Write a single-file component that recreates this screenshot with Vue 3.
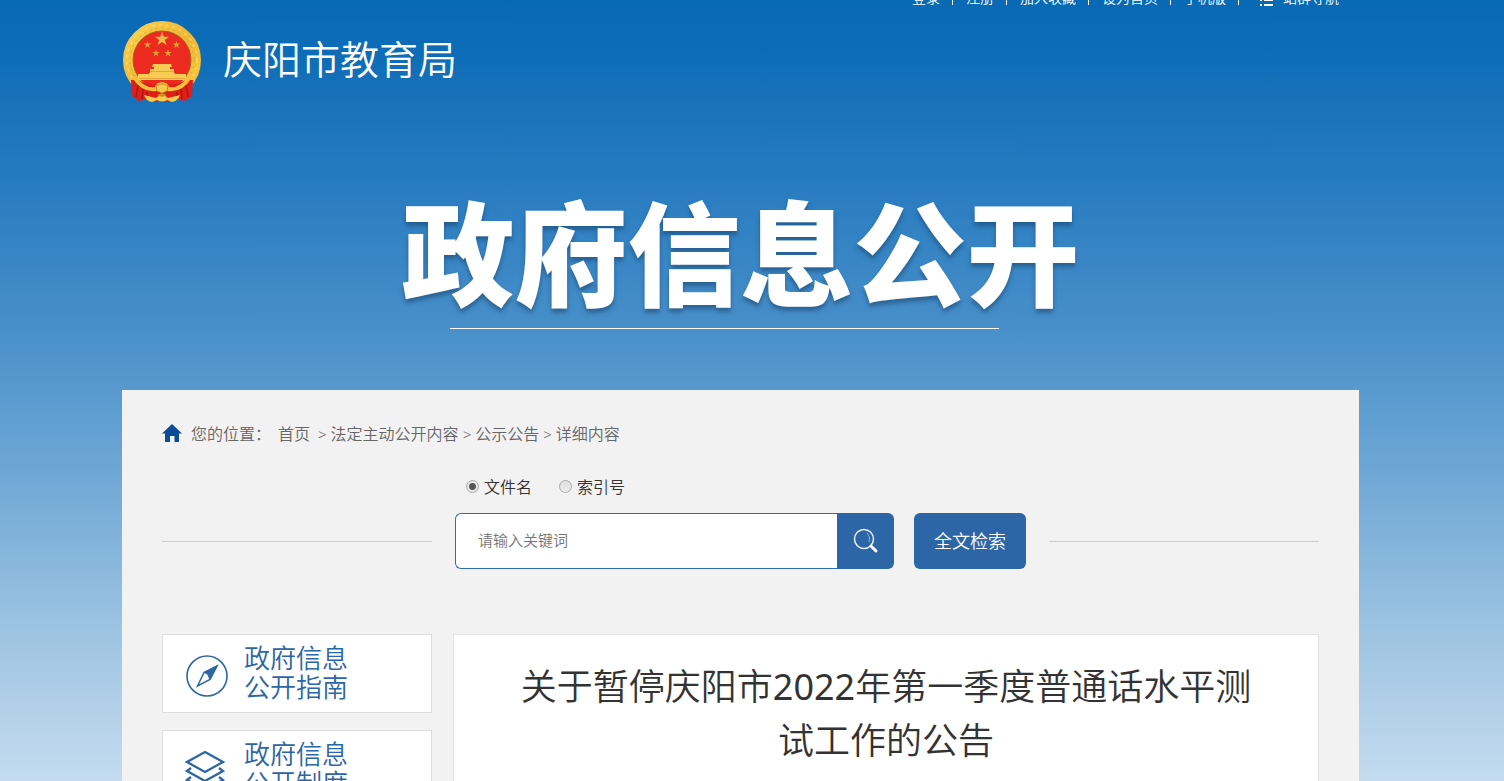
<script setup>
import { ref } from 'vue'

const topLinks = ['登录', '注册', '加入收藏', '设为首页', '手机版']
const crumbs = ['法定主动公开内容', '公示公告', '详细内容']
const mode = ref('name')
const keyword = ref('')
</script>

<template>
  <div class="page">
    <div class="wrap">
      <nav class="topbar">
        <template v-for="item in topLinks" :key="item">
          <a href="#">{{ item }}</a>
          <i class="bar"></i>
        </template>
        <a href="#" class="group-nav">
          <svg width="13" height="12" viewBox="0 0 13 12" fill="#fff">
            <path d="M0 0h2v2H0zM4 0h9v2H4zM0 5h2v2H0zM4 5h9v2H4zM0 10h2v2H0zM4 10h9v2H4z" />
          </svg>
          站群导航
        </a>
      </nav>

      <header class="brand">
        <svg class="emblem" width="80" height="84" viewBox="0 0 80 84" aria-hidden="true">
          <defs>
            <linearGradient id="gold" x1="0" y1="0" x2="1" y2="1">
              <stop offset="0" stop-color="#fad24f" />
              <stop offset="0.5" stop-color="#eeb634" />
              <stop offset="1" stop-color="#f8c93f" />
            </linearGradient>
          </defs>
          <circle cx="40" cy="40" r="34" fill="none" stroke="url(#gold)" stroke-width="10" />
          <circle cx="40" cy="40" r="35" fill="none" stroke="#fbdc72" stroke-width="2" stroke-dasharray="3 4" opacity="0.7" />
          <circle cx="40" cy="40" r="32" fill="none" stroke="#dfa22c" stroke-width="1" stroke-dasharray="2 4" />
          <circle cx="40" cy="40" r="29" fill="#ec2a20" stroke="#a96b18" stroke-width="1" />
          <path fill="#eabb45" d="M40 11.500l1.700 5.200h5.500l-4.400 3.200 1.700 5.200-4.500-3.200-4.500 3.200 1.700-5.200-4.400-3.200h5.500z" />
          <g fill="#dca035">
            <path id="small-star" d="M25.500 21l.9 2.600h2.800l-2.200 1.600.8 2.700-2.300-1.600-2.300 1.600.8-2.700-2.200-1.600h2.800z" />
            <use href="#small-star" x="29" />
            <use href="#small-star" x="8.500" y="8.500" />
            <use href="#small-star" x="20.500" y="8.500" />
          </g>
          <path fill="#f8cc52" d="M31 44h18l1 3H30zM32 47h16v2H32zM28 49h24v4H28zM27 53h26v2H27zM16 54h48v6H16z" />
          <path fill="#e9a53a" d="M28 51h24v1H28zM17 58h46v1H17z" />
          <path d="M9 60L16 60Q27 66 40 64Q53 66 64 60L71 60L70 76L63 81L53 79L47 82H33L27 79L17 81L10 76Z" fill="#df2019" />
          <path d="M16 65L14 77M21 69L20 79M25 72L25 78M64 65L66 77M59 69L60 79M55 72L55 78" stroke="#ae1513" stroke-width="1.500" fill="none" />
          <path d="M12 57Q21 71 34 69Q36 64 40 64T46 69Q59 71 68 57" fill="none" stroke="#f3bf3c" stroke-width="4" />
          <path d="M34 66l4-2h4l4 2-1 5-5 2-5-2z" fill="#f6c94a" stroke="#c98a20" stroke-width="1" />
          <path d="M22 75l12 3q6-6 12 0l12-3q-2 6-8 7l-5-2q-5 3-10 0l-5 2q-6-1-8-7z" fill="#f5cb4e" />
          <path d="M35 75l5-2 5 2-5 2z" fill="#cf8d22" />
        </svg>
        <span class="brand-name">庆阳市教育局</span>
      </header>

      <div class="hero">
        <h1>政府信息公开</h1>
      </div>

      <main class="panel">
        <nav class="crumbs">
          <svg class="home" width="20" height="18" viewBox="0 0 20 18" fill="#0f4c96">
            <path d="M10 0L20 9.500H17V18H12.500V12H8V18H3V9.500H0Z" />
          </svg>
          <span class="where">您的位置：</span>
          <a href="#" class="first">首页</a>
          <template v-for="c in crumbs" :key="c">
            <span class="sep">&gt;</span><a href="#">{{ c }}</a>
          </template>
        </nav>

        <form @submit.prevent>
          <div class="modes">
            <label><input v-model="mode" type="radio" name="mode" value="name">文件名</label>
            <label><input v-model="mode" type="radio" name="mode" value="index">索引号</label>
          </div>
          <div class="search-row">
            <span class="rule"></span>
            <div class="search">
              <input v-model="keyword" type="text" placeholder="请输入关键词" aria-label="请输入关键词">
              <button type="submit" aria-label="搜索">
                <svg width="28" height="28" viewBox="0 0 28 28" fill="none" stroke="#fff">
                  <circle cx="12" cy="12" r="9.500" stroke-width="1.500" opacity="0.900" />
                  <path d="M15 6Q19 10 17 15" stroke-width="1" opacity="0.500" />
                  <path d="M19 19L24 24" stroke-width="3" stroke-linecap="round" />
                </svg>
              </button>
            </div>
            <button type="button" class="fulltext">全文检索</button>
            <span class="rule"></span>
          </div>
        </form>

        <div class="columns">
          <aside>
            <a href="#" class="card">
              <svg width="44" height="44" viewBox="0 0 44 44" fill="none" stroke="#2c66a6">
                <circle cx="22" cy="22" r="20" stroke-width="1.600" />
                <path d="M32 12L19 18.500L12.500 32L25 25.500Z" stroke-width="1.500" />
                <path d="M32 12L19 18.500L22.500 20L25 25.500Z" fill="#2c66a6" />
              </svg>
              <span>政府信息<br>公开指南</span>
            </a>
            <a href="#" class="card">
              <svg width="44" height="44" viewBox="0 0 44 44" fill="none" stroke="#2c66a6" stroke-width="2.300">
                <path d="M20 2L38 12L20 22L2 12Z" />
                <path d="M6 18L2 21L20 31L38 21L34 18" />
                <path d="M6 27L2 30L20 40L38 30L34 27" />
              </svg>
              <span>政府信息<br>公开制度</span>
            </a>
          </aside>
          <article>
            <h2>关于暂停庆阳市<span class="year">2022</span>年第一季度普通话水平测试工作的公告</h2>
          </article>
        </div>
      </main>
    </div>
  </div>
</template>

<style>
body {
  margin: 0;
}
</style>

<style scoped>
.page {
  box-sizing: border-box;
  height: 100vh;
  overflow: hidden;
  padding-right: 23px;
  font-family: "Noto Sans", "Noto Sans CJK SC", sans-serif;
  font-weight: 350;
  color: #333;
  background: linear-gradient(#0869b5 0, #0d6cb7 50px, #1a73ba 110px, #277bc0 180px, #4b91ca 340px, #6ea7d5 470px, #a0c5e2 640px, #c4dbef 781px);
}
a {
  color: inherit;
  text-decoration: none;
}
.wrap {
  max-width: 1237px;
  margin: 0 auto;
}
.topbar {
  display: flex;
  justify-content: flex-end;
  align-items: center;
  height: 20px;
  margin-top: -12px;
  padding-right: 20px;
  font-size: 14px;
  line-height: 20px;
  color: #fff;
}
.bar {
  width: 1px;
  height: 12px;
  margin: 2px 13px 0 12px;
  background: #fff;
}
.group-nav {
  display: flex;
  align-items: center;
  gap: 10px;
  margin-left: 8px;
}
.group-nav svg {
  margin-top: 4px;
}
.brand {
  display: flex;
  align-items: center;
  height: 84px;
  margin-top: 12px;
}
.brand-name {
  margin-left: 21px;
  font-size: 39px;
  line-height: 60px;
  padding-bottom: 6px;
  color: #fff;
}
.hero {
  display: flex;
  justify-content: center;
  height: 286px;
}
h1 {
  margin: 46px 0 0;
  font-size: 113px;
  font-weight: 900;
  line-height: 206px;
  color: #fff;
  text-shadow: 0 4px 4px rgba(20, 60, 100, 0.5);
  display: flex;
  flex-direction: column;
  align-items: center;
}
h1::after {
  content: "";
  flex: none;
  width: 549px;
  height: 1px;
  margin: -28px 32px 0 0;
  background: #fff;
}
.panel {
  padding: 30px 40px;
  background: #f2f2f2;
}
.crumbs {
  display: flex;
  align-items: center;
  height: 28px;
  font-size: 16px;
  line-height: 28px;
  color: #666;
}
.home {
  padding-bottom: 2px;
}
.where {
  margin-left: 9px;
}
.first {
  margin: 0 4px 0 7px;
}
.sep {
  margin: 0 4px;
  font-size: 15px;
}
.modes {
  display: flex;
  gap: 27px;
  margin: 25px 0 12px 304px;
  font-size: 16px;
  line-height: 28px;
}
.modes label {
  display: flex;
  align-items: center;
}
.modes input {
  appearance: none;
  width: 13px;
  height: 13px;
  margin: 0 5px 2px 0;
  border: 1px solid #aaa;
  border-radius: 50%;
  background: linear-gradient(#dedede, #ededed);
}
.modes input:checked {
  background: radial-gradient(circle, #555 0 3px, #e8e8e8 4px);
}
.search-row {
  display: flex;
  align-items: center;
}
.rule {
  flex: 1;
  height: 1px;
  background: #ccc;
}
.search {
  display: flex;
  width: 439px;
  height: 56px;
  margin: 0 20px 0 23px;
}
.search input {
  box-sizing: border-box;
  flex: 1;
  min-width: 0;
  padding: 0 22px 2px;
  border: 1px solid #2c6bb8;
  border-right: 0;
  border-radius: 6px 0 0 6px;
  background: #fff;
  font: inherit;
  font-size: 15px;
  outline: none;
}
.search input::placeholder {
  color: #757575;
}
button {
  padding: 0;
  border: 0;
  background: #2c66a6;
  color: #fff;
  font: inherit;
}
.search button {
  display: flex;
  align-items: center;
  justify-content: center;
  width: 57px;
  border-radius: 0 6px 6px 0;
}
.fulltext {
  width: 112px;
  height: 56px;
  margin-right: 23px;
  padding-bottom: 2px;
  border-radius: 6px;
  font-size: 18px;
}
.columns {
  display: flex;
  gap: 21px;
  margin-top: 65px;
}
aside {
  display: flex;
  flex-direction: column;
  gap: 17px;
  width: 270px;
}
.card {
  display: flex;
  align-items: center;
  box-sizing: border-box;
  height: 79px;
  padding: 0 0 2px 22px;
  border: 1px solid #ddd;
  background: #fff;
  color: #2c66a6;
  font-size: 26px;
  line-height: 29px;
}
.card svg {
  margin: 6px 15px 0 0;
}
article {
  flex: 1;
  box-sizing: border-box;
  padding: 25px 60px;
  border: 1px solid #e4e4e4;
  background: #fff;
}
h2 {
  margin: 0;
  font-size: 36px;
  font-weight: 350;
  line-height: 54px;
  text-align: center;
  word-break: break-all;
}
.year {
  font-weight: 400;
}
</style>
